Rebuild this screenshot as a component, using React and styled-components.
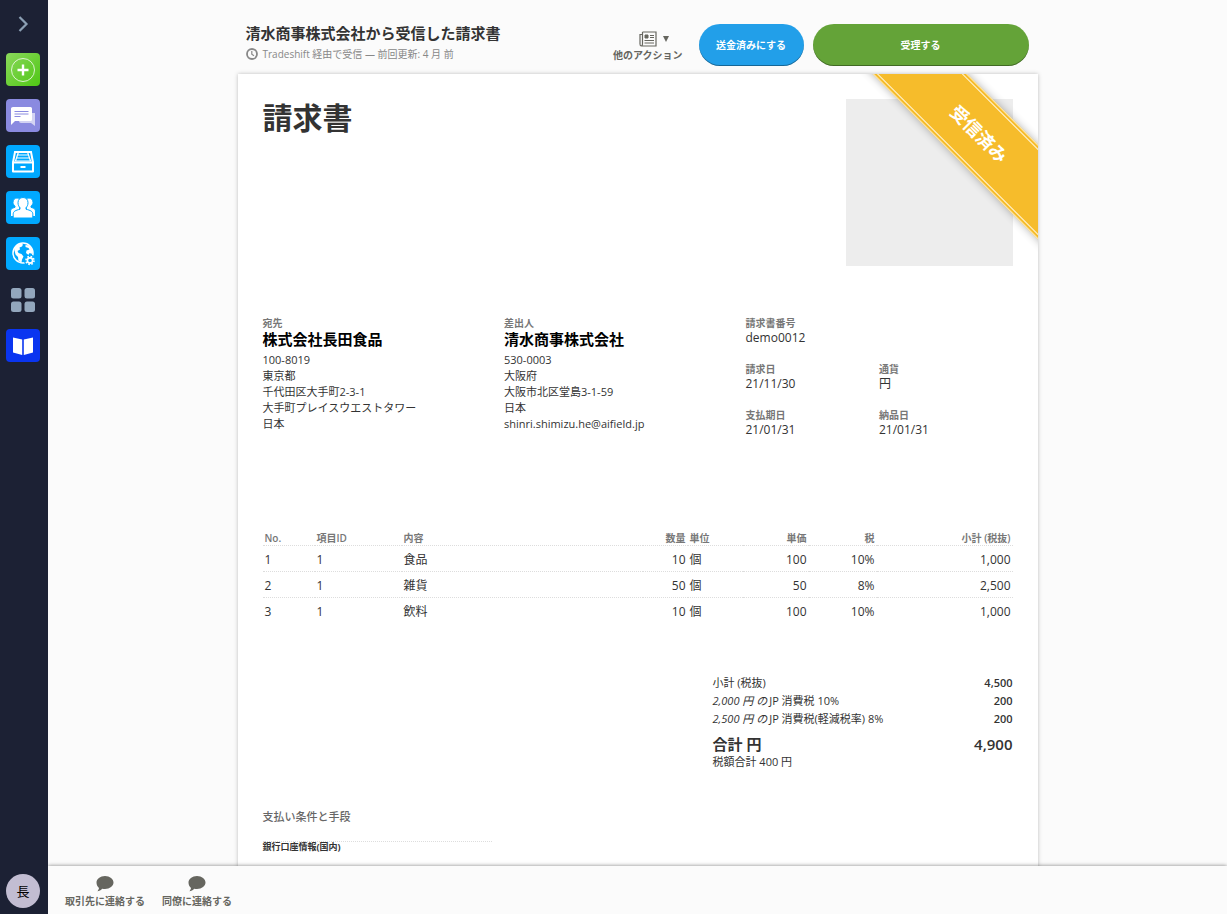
import React from 'react'
import styled, { createGlobalStyle, css } from 'styled-components'

const GlobalStyle = createGlobalStyle`
    * {
        box-sizing: border-box;
    }

    body {
        margin: 0;
        background: #fbfbfb;
        color: #333;
        font-family: 'Open Sans', 'Noto Sans CJK JP', sans-serif;
        font-size: 12px;
        line-height: 16px;
    }

    h1, h2, h3, p, dl, dd {
        margin: 0;
    }

    button {
        border: 0;
        padding: 0;
        background: none;
        font-family: inherit;
        cursor: pointer;
    }
`;

/* ---------- layout ---------- */

const Shell = styled.div`
    display: flex;
    height: 100vh;
`;

const Sidebar = styled.nav`
    display: flex;
    flex-direction: column;
    align-items: center;
    flex: none;
    width: 48px;
    padding: 7px 2px 6px 0;
    gap: 13px;
    background: #1c2134;
`;

const Main = styled.div`
    display: flex;
    flex-direction: column;
    flex: 1;
    min-width: 0;
`;

const Scroller = styled.main`
    flex: 1;
    min-height: 0;
    overflow-y: auto;
    scrollbar-width: none;
`;

const Page = styled.div`
    width: 100%;
    max-width: 800px;
    margin: 0 auto;
`;

/* ---------- sidebar ---------- */

const AppButton = styled.button`
    display: flex;
    align-items: center;
    justify-content: center;
    width: 34px;
    height: 33px;
    border-radius: 4px;
    background: ${props => props.$bg || 'transparent'};
`;

const Avatar = styled.button`
    width: 34px;
    height: 34px;
    margin-top: auto;
    padding-bottom: 2px;
    border-radius: 50%;
    background: #c2bdd2;
    color: #000;
    font-size: 13px;
`;

/* ---------- top bar ---------- */

const TopBar = styled.header`
    display: flex;
    align-items: flex-start;
    justify-content: space-between;
    padding: 24px 9px 8px 8px;
`;

const PageTitle = styled.h1`
    font-size: 15px;
    line-height: 18px;
    font-weight: 600;
`;

const Status = styled.p`
    display: flex;
    align-items: center;
    gap: 5px;
    margin-top: 4px;
    color: #888;
    font-size: 10px;
`;

const Actions = styled.div`
    display: flex;
    align-items: center;
    gap: 9px;
`;

const MoreButton = styled.button`
    display: flex;
    flex-direction: column;
    align-items: center;
    margin-right: 7px;
    padding-top: 3px;
    color: #66665f;
    font-size: 10px;
    line-height: 16px;
    font-weight: 600;
`;

const MoreIcons = styled.span`
    display: flex;
    align-items: center;
    gap: 6px;
    padding-left: 13px;
    margin-right: 1px;
`;

const PillButton = styled.button`
    width: ${props => props.$wide ? '216px' : '105px'};
    height: 42px;
    padding-bottom: 2px;
    border-radius: 21px;
    background: ${props => props.$wide ? '#64a338' : '#229fe9'};
    box-shadow: inset 0 -1px 0 rgba(0, 0, 0, .35);
    color: #fff;
    font-size: 10px;
    font-weight: 700;
`;

/* ---------- document ---------- */

const PaperFrame = styled.div`
    box-shadow: 0 0 4px rgba(0, 0, 0, .25);
`;

const Paper = styled.article`
    position: relative;
    overflow: hidden;
    padding: 25px 25px 80px;
    background: #fff;
`;

const PaperHead = styled.div`
    display: flex;
    justify-content: space-between;
    align-items: flex-start;
`;

const DocTitle = styled.h2`
    font-size: 30px;
    line-height: 38px;
    font-weight: 700;
`;

const LogoBox = styled.div`
    width: 167px;
    height: 167px;
    background: #ededed;
`;

// lies across the corner of the sheet
const Ribbon = styled.div`
    position: absolute;
    top: 26px;
    right: -74px;
    width: 265px;
    height: 67px;
    display: flex;
    align-items: center;
    justify-content: center;
    transform: rotate(45deg);
    background: #f6bc2b;
    border: solid #fdeab8;
    border-width: 1px 0;
    box-shadow: inset 0 2px 0 #f6bc2b, inset 0 -2px 0 #f6bc2b,
        inset 0 3px 0 #fff3d2, inset 0 -3px 0 #fff3d2, 0 0 8px rgba(0, 0, 0, .3);
    color: #fff;
    font-size: 18px;
    font-weight: 700;
`;

const Parties = styled.section`
    display: grid;
    grid-template-columns: 1fr 1fr 267px;
    margin-top: 50px;
    min-height: 165px;
`;

const labelText = css`
    color: #777;
    font-size: 10px;
    line-height: 14px;
    font-weight: 600;
`;

const PartyLabel = styled.h3`
    ${labelText}
`;

const PartyName = styled.p`
    margin-bottom: 4px;
    color: #000;
    font-size: 15px;
    line-height: 18px;
    font-weight: 700;
`;

const PartyLine = styled.p`
    font-size: 11px;
`;

const Details = styled.dl`
    display: grid;
    grid-template-columns: 1fr 1fr;
    align-content: start;
    row-gap: 16px;
`;

const Detail = styled.div`
    grid-column: ${props => props.$full ? '1 / -1' : 'auto'};
`;

const DetailLabel = styled.dt`
    ${labelText}
`;

/* ---------- item table ---------- */

const Table = styled.table`
    width: 100%;
    margin-top: 50px;
    border-collapse: collapse;
    table-layout: fixed;
`;

const Th = styled.th`
    ${labelText}
    width: ${props => props.$w || 'auto'};
    height: 14px;
    padding: 0 2px;
    text-align: ${props => props.$right ? 'right' : 'left'};
    white-space: nowrap;
`;

const Td = styled.td`
    height: 26px;
    padding: 2px 2px 0;
    border-top: 1px dotted #ddd;
    text-align: ${props => props.$right ? 'right' : 'left'};
`;

/* ---------- totals ---------- */

const Totals = styled.dl`
    width: 300px;
    margin: 50px 0 0 auto;
    font-size: 11px;
`;

const TotalRow = styled.div`
    display: flex;
    justify-content: space-between;
    line-height: 18px;

    dd {
        font-weight: 600;
    }

    em {
        margin-right: 2px;
    }
`;

const GrandTotal = styled(TotalRow)`
    margin-top: 6px;
    font-size: 15px;
    line-height: 20px;

    dt {
        font-weight: 700;
    }
`;

const Terms = styled.section`
    margin-top: 39px;
`;

const TermsTitle = styled.h3`
    color: #666;
    font-size: 11px;
    font-weight: 500;
`;

const BankTitle = styled.p`
    width: 229px;
    margin-top: 16px;
    border-top: 1px dotted #ddd;
    font-size: 9px;
    line-height: 10px;
    font-weight: 700;
`;

/* ---------- bottom bar ---------- */

const BottomBar = styled.footer`
    position: relative;
    display: flex;
    flex: none;
    gap: 17px;
    height: 48px;
    padding: 9px 17px 0;
    background: #fbfbfb;
    box-shadow: 0 0 4px rgba(0, 0, 0, .5);
    clip-path: inset(-6px 0 0 0);
`;

const ContactButton = styled.button`
    display: flex;
    flex-direction: column;
    align-items: center;
    gap: 1px;
    height: 34px;
    color: #66665f;
    font-size: 10px;
    line-height: 16px;
    font-weight: 600;
`;

/* ---------- icons ---------- */

const ChevronIcon = () => (
    <svg width="14" height="18" viewBox="0 0 14 18" fill="none" stroke="#8b9fb3" strokeWidth="2.200">
        <path d="M3.500 2l7 7-7 7" />
    </svg>
)

const PlusIcon = () => (
    <svg width="34" height="34" viewBox="0 0 34 34" fill="none" stroke="#fff">
        <circle cx="17" cy="17" r="11.5" opacity=".75" />
        <path d="M17 11.5v11M11.5 17h11" strokeWidth="2.4" />
    </svg>
)

const MessagesIcon = () => (
    <svg width="34" height="34" viewBox="0 0 34 34">
        <path d="M13 14h16v13l-4-3H15q-2 0-2-2z" fill="#d3d3f3" />
        <path d="M7 8h17.500q1.500 0 1.500 1.500v11q0 1.500-1.500 1.500H9l-4 4V9.500Q5 8 7 8z" fill="#fff" />
        <path d="M8.500 12.500h14M8.500 15h14M8.500 17.500h6" stroke="#8a8ae0" strokeWidth="1" />
    </svg>
)

const DrawerIcon = () => (
    <svg width="34" height="34" viewBox="0 0 34 34" fill="none" stroke="#fff" strokeWidth="2">
        <path d="M7 17.500h20V26.500H7z" strokeLinejoin="round" />
        <path d="M7 17.500L9 7h16l2 10.500" />
        <path d="M12.500 7l-1 3h11l-1-3M11.500 10l-1 3h13l-1-3M10.500 13l-1 3h15l-1-3" strokeWidth="1.200" />
        <path d="M14.500 22h5" />
    </svg>
)

const PeopleIcon = () => (
    <svg width="34" height="34" viewBox="0 0 34 34" fill="#fff">
        <g stroke="#00a8ff" strokeWidth="1">
            <path d="M11 7c2.500 0 4 1.700 4 4.500s-1 4-1.500 4.600v1.400l2 8H4.500v-4.500c0-3 1-3.500 4.500-4.700v-1.200c-1-1-2-2-2-3.600C7 9 8.500 7 11 7z" />
            <path d="M23 7c-2.500 0-4 1.700-4 4.500s1 4 1.500 4.600v1.400l-2 8h11v-4.500c0-3-1-3.500-4.500-4.700v-1.200c1-1 2-2 2-3.600C27 9 25.500 7 23 7z" />
            <path d="M17 6.500c3 0 5 2 5 5.200 0 2.500-1 4-2 5v1.500c4.500 1.200 6.800 2 6.800 5V27H7.200v-3.800c0-3 2.300-3.800 6.800-5v-1.500c-1-1-2-2.500-2-5 0-3.200 2-5.200 5-5.200z" />
        </g>
    </svg>
)

const GlobeIcon = () => (
    <svg width="34" height="34" viewBox="0 0 34 34" fill="none">
        <circle cx="17" cy="16" r="10" stroke="#fff" strokeWidth="1.500" />
        <path d="M8 11l3-3 4-1.500 2 1-1 2-2.500 1 .5 2-2.500 1.500 1 2 3 1 2 2.500-1.500 3-.5 3-3-1.500-.5-4-2.500-2.500z" fill="#fff" />
        <path d="M19.500 8l4 .5 3 4.500v4l-3-1-1 2-2.500-2 .5-2.500 3-1-1-1.500-3-1z" fill="#fff" />
        <circle cx="24" cy="23.500" r="6" fill="#00a8ff" />
        <circle cx="24" cy="23.500" r="2.600" stroke="#fff" strokeWidth="1.600" />
        <circle cx="24" cy="23.500" r="4" stroke="#fff" strokeWidth="1.600" strokeDasharray="1.600 1.540" />
    </svg>
)

const GridIcon = () => (
    <svg width="34" height="34" viewBox="0 0 34 34" fill="#93a7bd">
        <rect x="5" y="5" width="10.500" height="10.500" rx="2.500" />
        <rect x="18.500" y="5" width="10.500" height="10.500" rx="2.500" />
        <rect x="5" y="18.500" width="10.500" height="10.500" rx="2.500" />
        <rect x="18.500" y="18.500" width="10.500" height="10.500" rx="2.500" />
    </svg>
)

const BookIcon = () => (
    <svg width="34" height="34" viewBox="0 0 34 34" fill="#fff">
        <path d="M7 8.500l9.200 2V26L7 23.500zM27 8.500l-9.200 2V26l9.200-2.500z" />
    </svg>
)

const ClockIcon = () => (
    <svg width="12" height="12" viewBox="0 0 12 12" fill="none" stroke="#888">
        <circle cx="6" cy="6" r="5" strokeWidth="1.800" />
        <path d="M5.800 3v3.300l2.200 1.500" strokeWidth="1.200" />
    </svg>
)

const NewspaperIcon = () => (
    <svg width="18" height="16" viewBox="0 0 18 16" fill="none" stroke="#66665f">
        <path d="M3.500 1h13.500v14H2.500Q1 15 1 13V3.500h2.500M3.500 1v12q0 2-1.500 2" strokeWidth="1.200" />
        <path d="M11 4.500h4M11 6.500h4M5.500 9.500H15M5.500 12H15" />
        <path d="M6 4h3v3H6z" fill="#66665f" />
    </svg>
)

const CaretIcon = () => (
    <svg width="6" height="6" viewBox="0 0 6 6" fill="#66665f">
        <path d="M0 0h6L3 6z" />
    </svg>
)

const BubbleIcon = () => (
    <svg width="18" height="17" viewBox="0 0 18 17" fill="#66665f">
        <path d="M9 1c4.800 0 8.500 3 8.500 6.500S13.800 14 9 14c-1 0-2 0-2.800-.3C5 15 3.200 16 1.300 16.300c.8-1 1.500-2 1.700-3.400C1.300 11.700.5 9.700.5 7.500.5 4 4.200 1 9 1z" />
    </svg>
)

/* ---------- data ---------- */

const apps = [
    { label: 'メニューを開く', icon: ChevronIcon },
    { label: '作成', icon: PlusIcon, bg: 'linear-gradient(135deg, #8bd85c, #4fc714)' },
    { label: 'メッセージ', icon: MessagesIcon, bg: '#8a8ae0' },
    { label: '文書', icon: DrawerIcon, bg: '#00a8ff' },
    { label: 'ネットワーク', icon: PeopleIcon, bg: '#00a8ff' },
    { label: '設定', icon: GlobeIcon, bg: '#00a8ff' },
    { label: 'アプリ', icon: GridIcon },
    { label: 'ガイド', icon: BookIcon, bg: '#0a35f0' },
];

const parties = [
    {
        label: '宛先',
        name: '株式会社長田食品',
        lines: ['100-8019', '東京都', '千代田区大手町2-3-1', '大手町プレイスウエストタワー', '日本'],
    },
    {
        label: '差出人',
        name: '清水商事株式会社',
        lines: ['530-0003', '大阪府', '大阪市北区堂島3-1-59', '日本', 'shinri.shimizu.he@aifield.jp'],
    },
];

const details = [
    { label: '請求書番号', value: 'demo0012', full: true },
    { label: '請求日', value: '21/11/30' },
    { label: '通貨', value: '円' },
    { label: '支払期日', value: '21/01/31' },
    { label: '納品日', value: '21/01/31' },
];

const columns = [
    { label: 'No.', w: '52px' },
    { label: '項目ID', w: '87px' },
    { label: '内容' },
    { label: '数量', w: '45px', right: true },
    { label: '単位', w: '55px' },
    { label: '単価', w: '66px', right: true },
    { label: '税', w: '68px', right: true },
    { label: '小計 (税抜)', w: '136px', right: true },
];

const items = [
    ['1', '1', '食品', '10', '個', '100', '10%', '1,000'],
    ['2', '1', '雑貨', '50', '個', '50', '8%', '2,500'],
    ['3', '1', '飲料', '10', '個', '100', '10%', '1,000'],
];

function App()
{
    return (
        <Shell>
            <GlobalStyle />
            <Sidebar>
                {apps.map(({ label, icon: Icon, bg }) => (
                    <AppButton key={label} $bg={bg} aria-label={label}><Icon /></AppButton>
                ))}
                <Avatar>長</Avatar>
            </Sidebar>

            <Main>
                <Scroller>
                    <Page>
                        <TopBar>
                            <div>
                                <PageTitle>清水商事株式会社から受信した請求書</PageTitle>
                                <Status><ClockIcon />Tradeshift 経由で受信 — 前回更新: 4 月 前</Status>
                            </div>
                            <Actions>
                                <MoreButton>
                                    <MoreIcons><NewspaperIcon /><CaretIcon /></MoreIcons>
                                    他のアクション
                                </MoreButton>
                                <PillButton>送金済みにする</PillButton>
                                <PillButton $wide>受理する</PillButton>
                            </Actions>
                        </TopBar>

                        <PaperFrame>
                            <Paper>
                                <PaperHead>
                                    <DocTitle>請求書</DocTitle>
                                    <LogoBox />
                                </PaperHead>
                                <Ribbon>受信済み</Ribbon>

                                <Parties>
                                    {parties.map(party => (
                                        <div key={party.label}>
                                            <PartyLabel>{party.label}</PartyLabel>
                                            <PartyName>{party.name}</PartyName>
                                            {party.lines.map(line => <PartyLine key={line}>{line}</PartyLine>)}
                                        </div>
                                    ))}
                                    <Details>
                                        {details.map(item => (
                                            <Detail key={item.label} $full={item.full}>
                                                <DetailLabel>{item.label}</DetailLabel>
                                                <dd>{item.value}</dd>
                                            </Detail>
                                        ))}
                                    </Details>
                                </Parties>

                                <Table>
                                    <thead>
                                        <tr>
                                            {columns.map(col => (
                                                <Th key={col.label} $w={col.w} $right={col.right}>{col.label}</Th>
                                            ))}
                                        </tr>
                                    </thead>
                                    <tbody>
                                        {items.map(row => (
                                            <tr key={row[0]}>
                                                {row.map((cell, i) => (
                                                    <Td key={columns[i].label} $right={columns[i].right}>{cell}</Td>
                                                ))}
                                            </tr>
                                        ))}
                                    </tbody>
                                </Table>

                                <Totals>
                                    <TotalRow><dt>小計 (税抜)</dt><dd>4,500</dd></TotalRow>
                                    <TotalRow><dt><em>2,000 円 の</em>JP 消費税 10%</dt><dd>200</dd></TotalRow>
                                    <TotalRow><dt><em>2,500 円 の</em>JP 消費税(軽減税率) 8%</dt><dd>200</dd></TotalRow>
                                    <GrandTotal><dt>合計 円</dt><dd>4,900</dd></GrandTotal>
                                    <div>税額合計 400 円</div>
                                </Totals>

                                <Terms>
                                    <TermsTitle>支払い条件と手段</TermsTitle>
                                    <BankTitle>銀行口座情報(国内)</BankTitle>
                                </Terms>
                            </Paper>
                        </PaperFrame>
                    </Page>
                </Scroller>

                <BottomBar>
                    <ContactButton><BubbleIcon />取引先に連絡する</ContactButton>
                    <ContactButton><BubbleIcon />同僚に連絡する</ContactButton>
                </BottomBar>
            </Main>
        </Shell>
    )
}

export default App;
